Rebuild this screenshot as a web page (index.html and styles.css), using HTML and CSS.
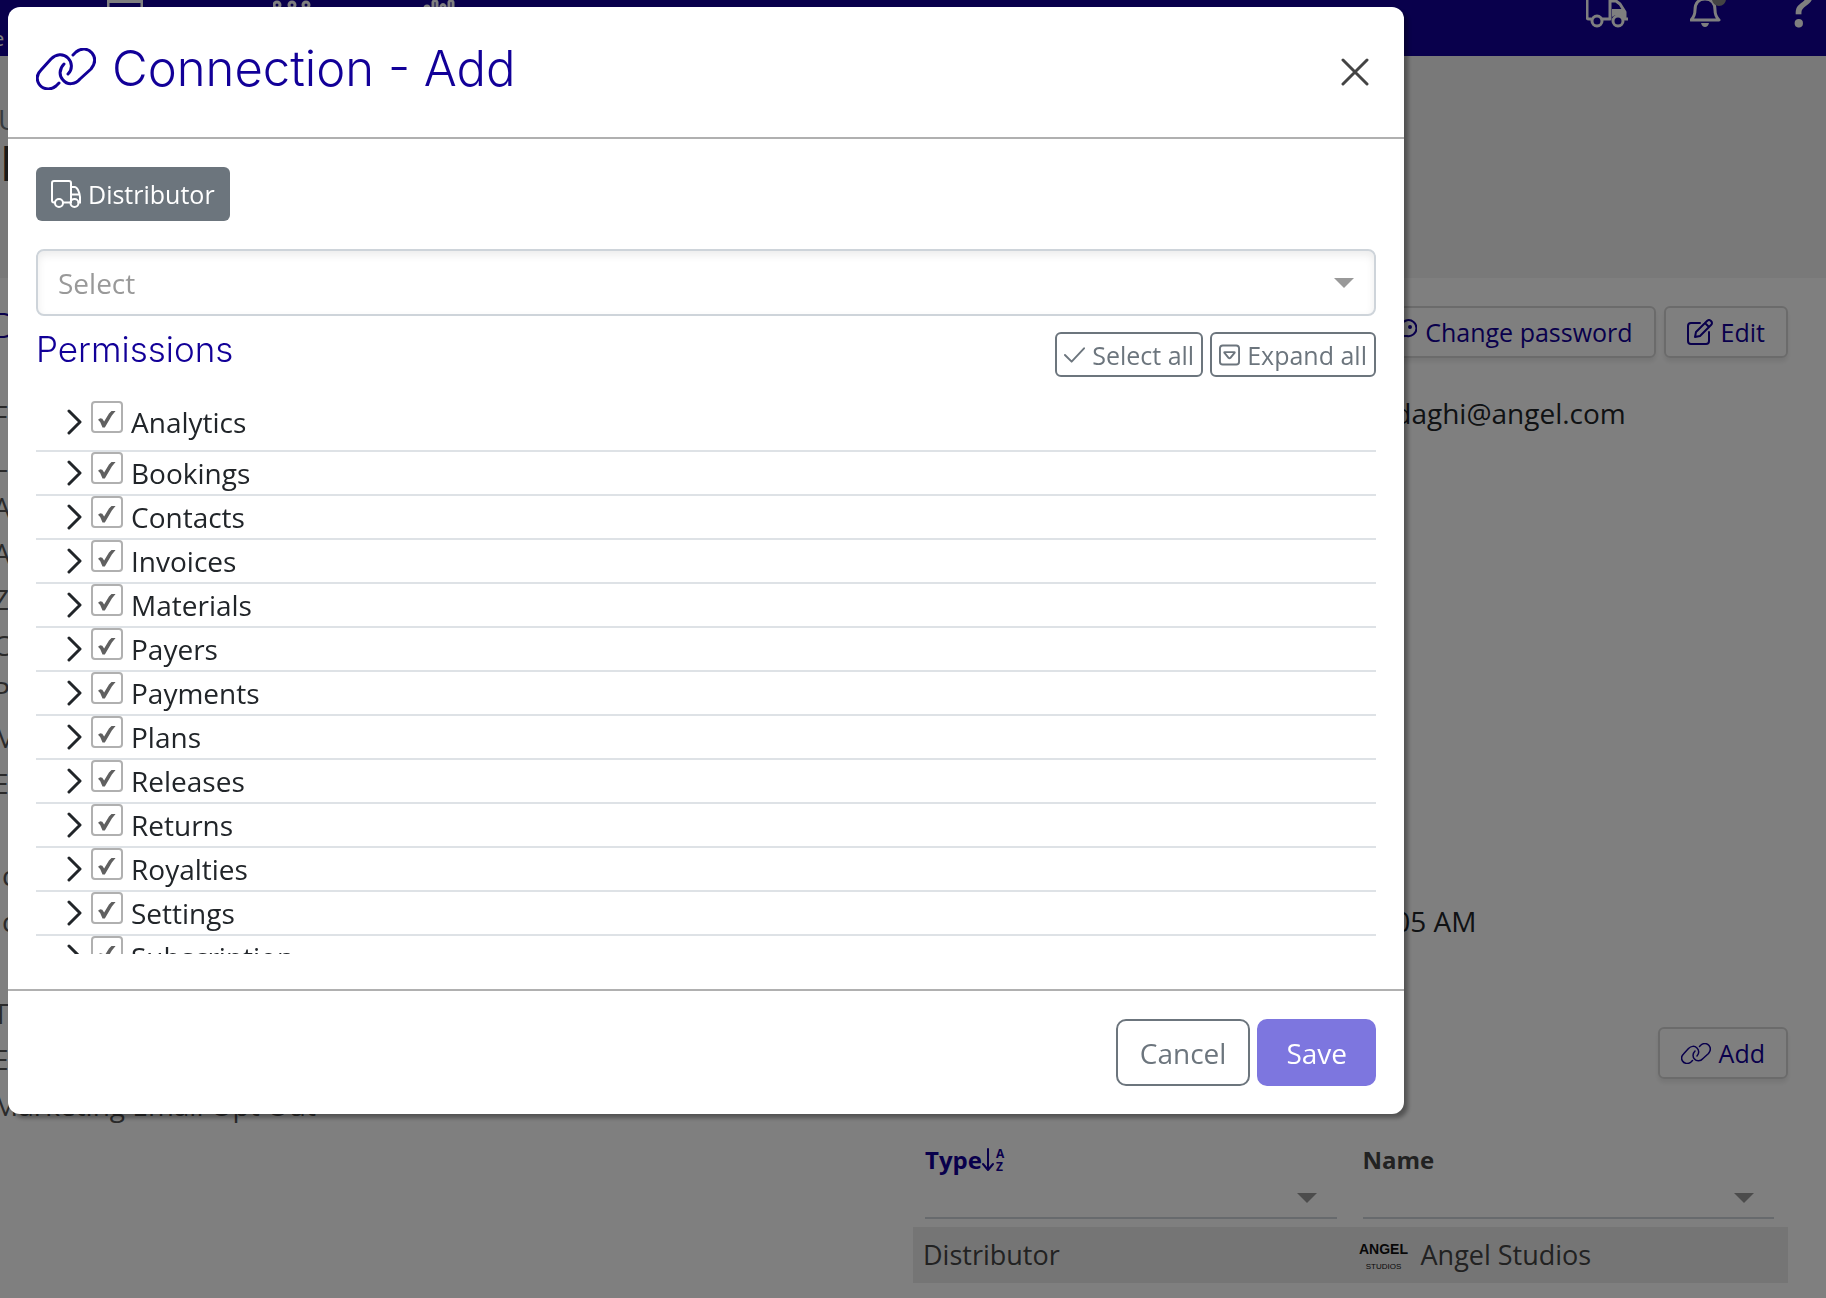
FILE: index.html
```html
<!DOCTYPE html>
<html lang="en">
<head>
  <meta charset="UTF-8" />
  <meta name="viewport" content="width=device-width, initial-scale=1" />
  <title>Connection - Add</title>
  <link rel="stylesheet" href="styles.css">
</head>
<body>

  <!-- Shared icons -->
  <svg class="sprite" aria-hidden="true">
    <symbol id="i-link" viewBox="0 0 60 42">
      <path d="M23 35 20 38C14 43 6 41 3 36C0 31 1 26 5 22L15 11C20 6 27 5 32 10C36 14 37 21 32 26M37 7 40 4C45 0 52 0 56 5C60 10 59 16 55 21L44 31C39 37 31 37 27 32C23 28 23 21 28 16" />
    </symbol>
    <symbol id="i-truck" viewBox="0 0 30 28">
      <path d="M4 22.500H3a2 2 0 0 1-2-2V3a2 2 0 0 1 2-2h15a2 2 0 0 1 2 2v19.500h-8M20 7h3.500c1.500 0 2.500 1 3.500 3s2 5 2 7v5.500M30 22.500h-2.500M20 14.500h8.500" />
      <circle cx="8" cy="23" r="4" /><circle cx="23.500" cy="23" r="4" />
    </symbol>
    <symbol id="i-chevron" viewBox="0 0 15 26">
      <path d="M2 2 13 13 2 24" />
    </symbol>
  </svg>

  <div class="page">
    <nav class="topbar">
      <a class="topbar-text" href="#">e</a>
      <svg class="nav-box" width="36" height="20" viewBox="0 0 36 20"><path d="M0 1h36" stroke-width="4" /><path d="M1 0v20M35 0v20" /></svg>
      <svg class="nav-dots" width="38" height="20" viewBox="0 0 38 20"><circle cx="4" cy="5" r="3" /><circle cx="19" cy="5" r="3" /><circle cx="33" cy="5" r="3" /></svg>
      <svg class="nav-bars" width="34" height="20" viewBox="0 0 34 20"><circle cx="4" cy="8" r="2" /><path d="M10 20V2q2-3 4 0v18M18 20V6q2-3 4 0v14M26 20V2q2-3 4 0v18" /></svg>
      <svg class="nav-truck" width="42" height="28" viewBox="0 0 42 28">
        <path d="M5 19H3q-2 0-2-2V-4h23v23h-8M24 1h6l4 3 5 8v7h3" /><path class="solid" d="M26 9h13v10h-3a6 6 0 0 0-10-2z" />
        <circle cx="11" cy="21" r="5" /><circle cx="32" cy="21" r="5" />
      </svg>
      <svg class="nav-bell" width="36" height="28" viewBox="0 0 36 28">
        <path d="M1 20c3-3 4-5 4-10C5 3 9-1 15-1s10 4 10 11c0 5 1 7 4 10z" /><path class="solid" d="M11 23h8q-1 4-4 4t-4-4z" /><circle class="dot" cx="29" cy="-1" r="7" />
      </svg>
      <a class="help" href="#">?</a>
    </nav>

    <header class="page-head">
      <p>Users</p>
      <h1>N</h1>
    </header>

    <main class="columns">
      <section class="details">
        <h2>Details</h2>
        <ul>
          <li>First name</li>
          <li>Last name</li>
          <li>Address 1</li>
          <li>Address 2</li>
          <li>Zip</li>
          <li>City</li>
          <li>Phone</li>
          <li>Mobile</li>
          <li>Email</li>
          <li></li>
          <li class="sub">code</li>
          <li class="sub">code</li>
          <li></li>
          <li>Time</li>
          <li>Email</li>
          <li>Marketing Email Opt Out</li>
        </ul>
      </section>

      <section class="account">
        <div class="actions">
          <button class="btn-page" type="button">
            <svg width="26" height="26" viewBox="0 0 26 26"><path d="M2 25v-6l8-7A8 8 0 1 1 16 17h-3l-3 3H7v4z" /><circle cx="19" cy="8" r="1" /></svg>
            Change password
          </button>
          <button class="btn-page" type="button">
            <svg width="26" height="26" viewBox="0 0 26 26"><path d="M13 4H4a3 3 0 0 0-3 3v15a3 3 0 0 0 3 3h15a3 3 0 0 0 3-3v-9M8 18l1-5L20 2q2-2 4 0t0 4L13 17zM18 4l4 4" /></svg>
            Edit
          </button>
        </div>
        <p class="email">daghi@angel.com</p>
        <p class="time">05 AM</p>
        <div class="actions connections">
          <button class="btn-page" type="button"><svg class="thin-link" width="30" height="21"><use href="#i-link" /></svg>Add</button>
        </div>

        <table>
          <thead>
            <tr>
              <th class="sorted">
                <label for="f-type">Type<svg width="25" height="24" viewBox="0 0 25 24"><path d="M6 1v20M1 16l5 6 5-6" /><text x="14" y="10">A</text><text x="14" y="23">Z</text></svg></label>
                <select id="f-type"><option></option></select>
              </th>
              <th>
                <label for="f-name">Name</label>
                <select id="f-name"><option></option></select>
              </th>
            </tr>
          </thead>
          <tbody>
            <tr>
              <td>Distributor</td>
              <td><div class="company"><span class="logo"><b>ANGEL</b><small>STUDIOS</small></span>Angel Studios</div></td>
            </tr>
          </tbody>
        </table>
      </section>
    </main>
  </div>

  <div class="backdrop">
    <div class="modal" role="dialog" aria-labelledby="modal-title">
      <div class="modal-header">
        <h2 id="modal-title"><svg width="60" height="42"><use href="#i-link" /></svg>Connection - Add</h2>
        <button class="close" type="button" aria-label="Close"><svg width="28" height="28" viewBox="0 0 28 28"><path d="M2 2 26 26M26 2 2 26" /></svg></button>
      </div>

      <div class="modal-body">
        <button class="badge" type="button"><svg width="30" height="28"><use href="#i-truck" /></svg>Distributor</button>

        <select class="picker" aria-label="Distributor">
          <option>Select</option>
        </select>

        <div class="permissions-head">
          <h3>Permissions</h3>
          <div class="tools">
            <button type="button"><svg width="22" height="22" viewBox="0 0 22 22"><path d="M1 11l7 7L21 4" /></svg>Select all</button>
            <button type="button"><svg width="22" height="22" viewBox="0 0 22 22"><rect x="1" y="1" width="20" height="20" rx="3" /><path d="M6 8h10q1 0 0 1l-4 5q-1 1-2 0L6 9q-1-1 0-1z" /></svg>Expand all</button>
          </div>
        </div>

        <ul class="permissions">
          <li><button type="button" aria-label="Expand"><svg width="15" height="26"><use href="#i-chevron" /></svg></button><label><input type="checkbox" checked>Analytics</label></li>
          <li><button type="button" aria-label="Expand"><svg width="15" height="26"><use href="#i-chevron" /></svg></button><label><input type="checkbox" checked>Bookings</label></li>
          <li><button type="button" aria-label="Expand"><svg width="15" height="26"><use href="#i-chevron" /></svg></button><label><input type="checkbox" checked>Contacts</label></li>
          <li><button type="button" aria-label="Expand"><svg width="15" height="26"><use href="#i-chevron" /></svg></button><label><input type="checkbox" checked>Invoices</label></li>
          <li><button type="button" aria-label="Expand"><svg width="15" height="26"><use href="#i-chevron" /></svg></button><label><input type="checkbox" checked>Materials</label></li>
          <li><button type="button" aria-label="Expand"><svg width="15" height="26"><use href="#i-chevron" /></svg></button><label><input type="checkbox" checked>Payers</label></li>
          <li><button type="button" aria-label="Expand"><svg width="15" height="26"><use href="#i-chevron" /></svg></button><label><input type="checkbox" checked>Payments</label></li>
          <li><button type="button" aria-label="Expand"><svg width="15" height="26"><use href="#i-chevron" /></svg></button><label><input type="checkbox" checked>Plans</label></li>
          <li><button type="button" aria-label="Expand"><svg width="15" height="26"><use href="#i-chevron" /></svg></button><label><input type="checkbox" checked>Releases</label></li>
          <li><button type="button" aria-label="Expand"><svg width="15" height="26"><use href="#i-chevron" /></svg></button><label><input type="checkbox" checked>Returns</label></li>
          <li><button type="button" aria-label="Expand"><svg width="15" height="26"><use href="#i-chevron" /></svg></button><label><input type="checkbox" checked>Royalties</label></li>
          <li><button type="button" aria-label="Expand"><svg width="15" height="26"><use href="#i-chevron" /></svg></button><label><input type="checkbox" checked>Settings</label></li>
          <li><button type="button" aria-label="Expand"><svg width="15" height="26"><use href="#i-chevron" /></svg></button><label><input type="checkbox" checked>Subscription</label></li>
        </ul>
      </div>

      <div class="modal-footer">
        <button class="cancel" type="button">Cancel</button>
        <button class="save" type="button">Save</button>
      </div>
    </div>
  </div>

</body>
</html>
```
FILE: styles.css
```css
* {
  box-sizing: border-box;
}

html, body {
  margin: 0; padding: 0;
  height: 100%;
  overflow: hidden;
  font-family: 'Open Sans', sans-serif;
  font-size: 28px;
  line-height: 38px;
  color: #212529;
  background: white;
}

h1, h2, h3, p, ul {
  margin: 0; padding: 0;
  font-weight: 400;
}

ul {
  list-style: none;
}

button, select, input {
  font: inherit;
  color: inherit;
  margin: 0;
}

button {
  display: flex;
  align-items: center;
  background: none;
  border: none;
  padding: 0;
  white-space: nowrap;
}

a {
  color: inherit;
  text-decoration: none;
}

svg {
  flex: none;
  fill: none;
  stroke: currentColor;
  stroke-width: 2;
  stroke-linecap: round;
  stroke-linejoin: round;
}

.sprite {
  position: absolute;
  width: 0; height: 0;
}

/* Top bar */
.topbar {
  display: flex;
  align-items: flex-start;
  height: 56px;
  background: #120098;
  color: #fff;
}

.topbar svg {
  stroke-width: 3;
}

.topbar .solid {
  fill: currentColor;
  stroke: none;
}

.topbar .dot {
  fill: #888;
  stroke: none;
}

.topbar-text {
  width: 107px;
  padding-top: 20px;
  font-size: 20px;
  text-indent: -7px;
}

.nav-dots { margin-left: 130px; }
.nav-bars { margin-left: 112px; }
.nav-truck { margin-left: auto; }
.nav-bell { margin-left: 62px; }

.help {
  margin: 0 12px 0 62px;
  font-size: 58px;
  font-weight: 600;
  line-height: 10px;
}

/* Page behind the dialog */
.page-head {
  height: 222px;
  padding-top: 44px;
  background: #f2f2f2;
  color: #6c757d;
}

.page-head p {
  text-indent: -2px;
}

.page-head h1 {
  font-size: 48px;
  font-weight: 700;
  line-height: 50px;
  color: #333;
}

.columns {
  display: grid;
  grid-template-columns: 1fr 1fr;
}

.details {
  padding-top: 28px;
  color: #555;
}

.details h2 {
  height: 90px;
  font-family: Inter, sans-serif;
  font-weight: 300;
  font-size: 34px;
  line-height: 40px;
  text-indent: -8px;
  color: #120098;
}

.details li {
  height: 46px;
  text-indent: -7px;
}

.details .sub {
  text-indent: 2px;
}

.account {
  padding: 28px 38px 0 0;
}

.actions {
  display: flex;
  justify-content: flex-end;
  gap: 8px;
}

.btn-page {
  height: 52px;
  padding: 0 21px;
  gap: 8px;
  border: 2px solid #d6d6d6;
  border-radius: 6px;
  box-shadow: 0 4px 4px rgba(0, 0, 0, 0.08);
  font-size: 25px;
  color: #120098;
}

.thin-link {
  stroke-width: 3;
}

.email, .time {
  padding-left: 55%;
}

.email {
  padding-top: 36px;
}

.time {
  padding-top: 470px;
}

.connections {
  padding-top: 87px;
}

table {
  width: 100%;
  table-layout: fixed;
  border-spacing: 0;
  margin-top: 62px;
  color: #444;
}

th, td {
  text-align: left;
}

th {
  padding: 0 14px 8px 12px;
  font-size: 24px;
}

th label {
  display: flex;
  align-items: center;
}

th text {
  font-size: 12px;
  font-weight: 700;
  fill: currentColor;
  stroke: none;
}

.sorted {
  color: #120098;
}

/* Arrow is a downward triangle */
th select, .picker {
  display: block;
  width: 100%;
  appearance: none;
  background: url("data:image/svg+xml,%3Csvg xmlns='http://www.w3.org/2000/svg' width='20' height='10'%3E%3Cpath d='M0 0h20L10 10z' fill='%23999'/%3E%3C/svg%3E") no-repeat right 20px center;
}

th select {
  height: 40px;
  border: none;
  border-bottom: 2px solid #ced4da;
}

td {
  height: 56px;
  padding: 0 10px;
  background: #ebebeb;
  font-size: 27px;
}

.company {
  display: flex;
  align-items: center;
  gap: 14px;
}

.logo {
  display: flex;
  flex-direction: column;
  align-items: center;
  width: 46px;
  color: #111;
  font-family: 'Liberation Sans', sans-serif;
}

.logo b {
  font-size: 14px;
  line-height: 24px;
}

.logo small {
  font-size: 8px;
  line-height: 12px;
}

/* Dialog */
.backdrop {
  position: fixed;
  inset: 0;
  padding: 7px 8px;
  background: rgba(0, 0, 0, 0.5);
}

.modal {
  max-width: 1396px;
  background: white;
  border-radius: 12px;
  box-shadow: 4px 4px 4px rgba(0, 0, 0, 0.35);
}

.modal-header {
  display: flex;
  align-items: center;
  justify-content: space-between;
  padding: 32px 35px 38px 28px;
  border-bottom: 2px solid #b0b0b0;
}

.modal-header h2 {
  display: flex;
  align-items: center;
  gap: 16px;
  font-family: Inter, sans-serif;
  font-weight: 300;
  font-size: 49px;
  line-height: 60px;
  color: #120098;
}

.modal-header svg {
  stroke-width: 3;
}

.close {
  padding-top: 6px;
  color: #444;
}

.modal-body {
  padding: 28px 28px 35px;
}

.badge {
  height: 54px;
  padding: 0 15px;
  gap: 7px;
  border-radius: 6px;
  background: #6c757d;
  color: white;
  font-size: 25px;
}

.badge svg {
  stroke-width: 2;
}

.picker {
  height: 67px;
  margin-top: 28px;
  padding: 0 20px;
  border: 2px solid #ced4da;
  border-radius: 8px;
  box-shadow: inset 0 4px 8px rgba(0, 0, 0, 0.08);
  color: #999;
}

.permissions-head {
  display: flex;
  justify-content: space-between;
  align-items: flex-start;
  margin: 16px 0 24px;
}

.permissions-head h3 {
  font-family: Inter, sans-serif;
  font-weight: 300;
  font-size: 35px;
  line-height: 34px;
  color: #120098;
}

.tools {
  display: flex;
  gap: 7px;
}

.tools button {
  height: 45px;
  padding: 0 7px;
  gap: 7px;
  border: 2px solid #6c757d;
  border-radius: 6px;
  color: #6c757d;
  font-size: 25px;
}

.tools button svg {
  width: 21px;
  stroke-width: 2;
}

.permissions {
  height: 553px;
  overflow: hidden;
}

.permissions li {
  display: flex;
  gap: 9px;
  padding-left: 31px;
  line-height: 42px;
  border-top: 2px solid #dee2e6;
}

.permissions li:first-child {
  padding-bottom: 7px;
  border-top: none;
}

.permissions svg {
  stroke-width: 3;
}

.permissions label {
  display: flex;
  gap: 8px;
}

.permissions input {
  display: grid;
  place-items: center;
  width: 32px;
  height: 32px;
  padding-top: 4px;
  appearance: none;
  border: 2px solid #b0b0b0;
  border-radius: 4px;
}

.permissions input:checked::before {
  content: '';
  width: 18px;
  height: 17px;
  background: #606060;
  clip-path: polygon(0 54%, 12% 45%, 24% 48%, 34% 64%, 61% 18%, 75% 3%, 100% 0, 77% 29%, 38% 100%, 25% 100%, 12% 67%);
}

.modal-footer {
  display: flex;
  justify-content: flex-end;
  gap: 7px;
  padding: 28px;
  border-top: 2px solid #b0b0b0;
}

.modal-footer button {
  height: 67px;
  padding: 0 22px;
  border: 2px solid #6c757d;
  border-radius: 10px;
  color: #6c757d;
}

.modal-footer .save {
  padding: 0 27px;
  border-color: #7d76df;
  background: #7d76df;
  color: white;
}
```
